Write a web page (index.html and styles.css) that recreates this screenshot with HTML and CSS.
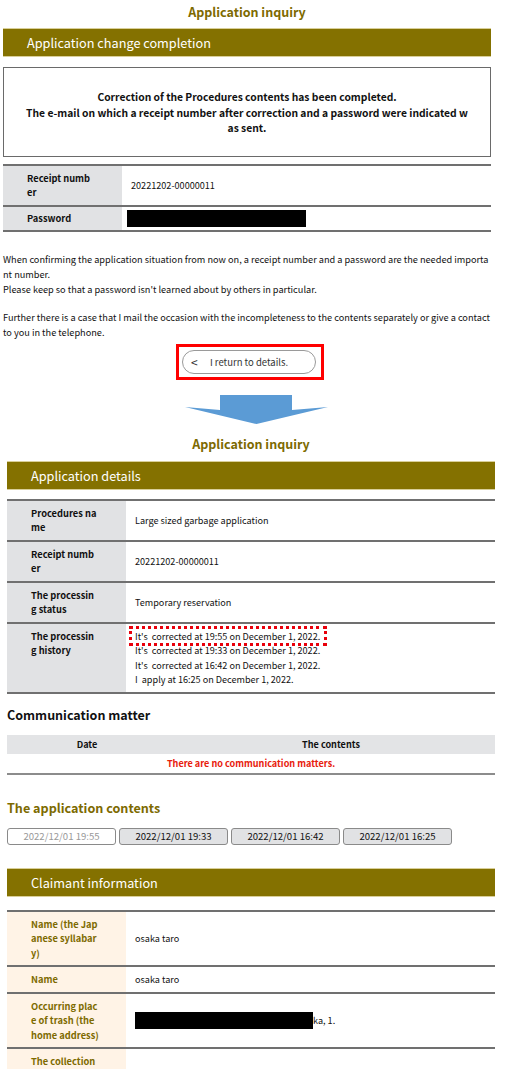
FILE: index.html
```html
<!DOCTYPE html>
<html lang="en">
<head>
<meta charset="UTF-8" />
<meta name="viewport" content="width=device-width, initial-scale=1" />
<title>Application inquiry</title>
<link rel="stylesheet" href="styles.css">
</head>
<body>

<!-- Screen 1: change completion -->
<div class="screen screen-a">
  <h1 class="page-title">Application inquiry</h1>
  <div class="bar">Application change completion</div>

  <div class="notice">
    Correction of the Procedures contents has been completed.<br>
    The e-mail on which a receipt number after correction and a password were indicated was sent.
  </div>

  <div class="dl">
    <div class="row">
      <div class="th">Receipt number</div>
      <div class="td">20221202-00000011</div>
    </div>
    <div class="row row-pw">
      <div class="th">Password</div>
      <div class="td td-mask"><span class="mask mask-pw"></span></div>
    </div>
  </div>

  <p class="note">When confirming the application situation from now on, a receipt number and a password are the needed important number.<br>
  Please keep so that a password isn't learned about by others in particular.</p>
  <p class="note note-2">Further there is a case that I mail the occasion with the incompleteness to the contents separately or give a contact to you in the telephone.</p>

  <div class="back-wrap">
    <div class="highlight">
      <button class="back-btn"><span class="back-arrow">&lt;</span>I return to details.</button>
    </div>
  </div>
</div>

<!-- Arrow between screens -->
<div class="arrow">
  <svg width="144" height="30" viewBox="0 0 144 30">
    <polygon points="35,0 107,0 107,15 143,12 71.5,29 0,12 35,15" fill="#5b9bd5"/>
  </svg>
</div>

<!-- Screen 2: application details -->
<div class="screen screen-b">
  <h1 class="page-title title-b">Application inquiry</h1>
  <div class="bar">Application details</div>

  <div class="dl dl-b">
    <div class="row">
      <div class="th">Procedures name</div>
      <div class="td">Large sized garbage application</div>
    </div>
    <div class="row">
      <div class="th">Receipt number</div>
      <div class="td">20221202-00000011</div>
    </div>
    <div class="row">
      <div class="th">The processing status</div>
      <div class="td">Temporary reservation</div>
    </div>
    <div class="row">
      <div class="th">The processing history</div>
      <div class="td td-top">
        <div class="history">
          <span class="dotted">It's&nbsp; corrected at 19:55 on December 1, 2022.</span>
          <span>It's&nbsp; corrected at 19:33 on December 1, 2022.</span>
          <span>It's&nbsp; corrected at 16:42 on December 1, 2022.</span>
          <span>I&nbsp; apply at 16:25 on December 1, 2022.</span>
        </div>
      </div>
    </div>
  </div>

  <h2 class="sub-title">Communication matter</h2>
  <table class="comm">
    <tr><th class="col-date">Date</th><th>The contents</th></tr>
    <tr><td colspan="2" class="empty">There are no communication matters.</td></tr>
  </table>

  <h2 class="sub-title olive">The application contents</h2>
  <div class="tabs">
    <button class="tab current">2022/12/01 19:55</button>
    <button class="tab">2022/12/01 19:33</button>
    <button class="tab">2022/12/01 16:42</button>
    <button class="tab">2022/12/01 16:25</button>
  </div>

  <div class="bar bar-c">Claimant information</div>
  <div class="dl dl-c">
    <div class="row">
      <div class="th">Name (the Japanese syllabary)</div>
      <div class="td">osaka taro</div>
    </div>
    <div class="row">
      <div class="th">Name</div>
      <div class="td">osaka taro</div>
    </div>
    <div class="row">
      <div class="th">Occurring place of trash (the home address)</div>
      <div class="td"><span class="mask mask-addr"></span>ka, 1.</div>
    </div>
    <div class="row">
      <div class="th">The collection date</div>
      <div class="td"></div>
    </div>
  </div>
</div>

</body>
</html>
```

FILE: styles.css
```css
  body, html {
    margin: 0; padding: 0;
    background: #fff;
    font-family: "Noto Sans CJK JP", "Noto Sans", sans-serif;
    color: #111;
  }

  .screen {
    width: 488px;
  }
  .screen-a { margin-left: 3px; }
  .screen-b { margin-left: 7px; }

  .page-title {
    margin: 0;
    padding-top: 2px;
    font-size: 12.5px;
    line-height: 20px;
    font-weight: 700;
    color: #7d6a00;
    text-align: center;
  }
  .title-b { padding-top: 0; }

  .bar {
    margin-top: 6px;
    background: #847100;
    border-top: 1px solid #d9cf99;
    border-bottom: 1px solid #d9cf99;
    color: #fff;
    font-size: 12.7px;
    line-height: 27px;
    padding: 0 24px;
  }

  .notice {
    margin-top: 10px;
    border: 1px solid #6a6a6a;
    padding: 21px 22px 20px;
    font-size: 10.3px;
    line-height: 15.5px;
    font-weight: 700;
    text-align: center;
    word-break: break-all;
  }

  /* label / value rows */
  .dl {
    margin-top: 7px;
    border-top: 2px solid #707070;
  }
  .dl-b { margin-top: 9px; }
  .dl-c { margin-top: 13px; }

  .row {
    display: flex;
    border-bottom: 2px solid #707070;
  }

  .th {
    flex: none;
    width: 119px;
    box-sizing: border-box;
    padding: 5px 27px 5px 24px;
    background: #e1e2e4;
    font-size: 9.3px;
    line-height: 14.5px;
    font-weight: 700;
    word-break: break-all;
  }
  .row-pw .th { padding-top: 4px; padding-bottom: 4.5px; }

  .td {
    flex: 1;
    display: flex;
    align-items: center;
    padding: 0 9px;
    font-size: 9.1px;
    line-height: 14.5px;
  }
  .td-mask { padding-left: 5px; }
  .td-top { align-items: flex-start; padding-top: 5px; padding-bottom: 5px; }

  .mask {
    display: inline-block;
    background: #000;
    height: 17px;
  }
  .mask-pw { width: 179px; }
  .mask-addr { width: 178px; }

  .history span {
    display: block;
    white-space: nowrap;
  }
  .history .dotted {
    display: inline-block;
    margin: -3px 0 -3px -6px;
    padding: 0 4px 0 3px;
    border: 3px dotted #e8000b;
  }

  .note {
    margin: 20px 0 0;
    font-size: 9.2px;
    line-height: 15px;
    word-break: break-all;
  }
  .note-2 { margin-top: 13px; }

  .back-wrap {
    margin-top: 4px;
    display: flex;
    justify-content: center;
    padding-left: 6px;
  }
  .highlight {
    border: 3px solid #ff0000;
    padding: 3px 5px 3px 3px;
  }
  .back-btn {
    position: relative;
    display: block;
    width: 134px;
    height: 24px;
    border: 1px solid #9a9a9a;
    border-radius: 12px;
    background: #fff;
    font-family: inherit;
    font-size: 9.5px;
    color: #333;
    padding: 0;
    text-align: center;
  }
  .back-arrow {
    position: absolute;
    left: 8px;
    top: 3px;
    font-size: 12px;
    line-height: 16px;
    color: #333;
  }

  .arrow {
    margin-top: 15px;
    display: flex;
    justify-content: center;
    padding-left: 4px;
    height: 30px;
  }

  .title-b { margin-top: 9px; }
  .screen-b .bar { margin-top: 7px; }

  .sub-title {
    margin: 11px 0 0;
    font-size: 12.5px;
    line-height: 20px;
    font-weight: 700;
    color: #111;
  }
  .sub-title.olive {
    margin-top: 23px;
    font-size: 12.6px;
    color: #7d6a00;
  }

  .comm {
    margin-top: 10px;
    width: 100%;
    border-collapse: collapse;
    font-size: 9.1px;
    border-bottom: 2px solid #8c8c8c;
  }
  .comm th {
    background: #e3e4e6;
    font-weight: 700;
    height: 19px;
    padding: 0;
    line-height: 19px;
  }
  .comm .col-date { width: 160px; }
  .comm td {
    padding: 0;
    height: 19px;
    line-height: 19px;
  }
  .comm .empty {
    text-align: center;
    color: #e8200c;
    font-weight: 700;
  }

  .tabs {
    margin-top: 10px;
    display: flex;
    gap: 3px;
  }
  .tab {
    width: 109px;
    height: 17px;
    padding: 0;
    border: 1px solid #8a8a8a;
    border-radius: 3px;
    background: #e1e2e4;
    font-family: inherit;
    font-size: 9.6px;
    line-height: 15px;
    color: #111;
  }
  .tab.current {
    background: #fff;
    color: #999;
  }

  .bar-c { margin-top: 23px !important; }

  .dl-c .th {
    background: #fff3e6;
    color: #7d6a00;
  }
```
